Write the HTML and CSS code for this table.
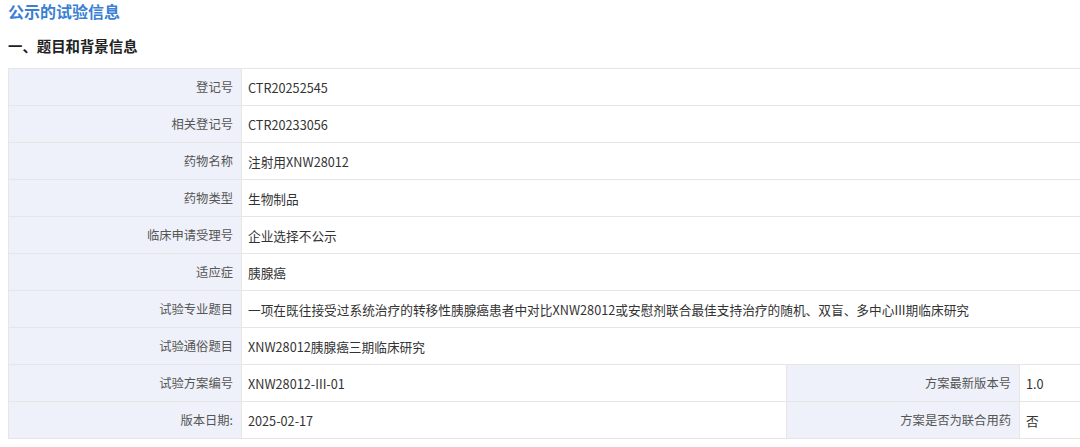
FILE: index.html
```html
<!DOCTYPE html>
<html lang="zh-CN">
<head>
    <meta charset="UTF-8">
    <meta name="viewport" content="width=device-width, initial-scale=1.0">
    <title>公示的试验信息</title>
    <link rel="stylesheet" href="styles.css">
</head>
<body>

    <!-- 页面标题 -->
    <h2 class="page-title">公示的试验信息</h2>
    <h3 class="section-title">一、题目和背景信息</h3>

    <table class="info-table">
        <colgroup>
            <col class="col-label">
            <col class="col-value">
            <col class="col-label">
            <col>
        </colgroup>
        <tr>
            <th>登记号</th>
            <td colspan="3">CTR20252545</td>
        </tr>
        <tr>
            <th>相关登记号</th>
            <td colspan="3">CTR20233056</td>
        </tr>
        <tr>
            <th>药物名称</th>
            <td colspan="3">注射用XNW28012</td>
        </tr>
        <tr>
            <th>药物类型</th>
            <td colspan="3">生物制品</td>
        </tr>
        <tr>
            <th>临床申请受理号</th>
            <td colspan="3">企业选择不公示</td>
        </tr>
        <tr>
            <th>适应症</th>
            <td colspan="3">胰腺癌</td>
        </tr>
        <tr>
            <th>试验专业题目</th>
            <td colspan="3">一项在既往接受过系统治疗的转移性胰腺癌患者中对比XNW28012或安慰剂联合最佳支持治疗的随机、双盲、多中心III期临床研究</td>
        </tr>
        <tr>
            <th>试验通俗题目</th>
            <td colspan="3">XNW28012胰腺癌三期临床研究</td>
        </tr>
        <tr>
            <th>试验方案编号</th>
            <td>XNW28012-III-01</td>
            <th>方案最新版本号</th>
            <td>1.0</td>
        </tr>
        <tr>
            <th>版本日期:</th>
            <td>2025-02-17</td>
            <th>方案是否为联合用药</th>
            <td>否</td>
        </tr>
    </table>

</body>
</html>
```

FILE: styles.css
```css
/* CSS */
body {
    font-family: "Noto Sans CJK SC", "Noto Sans", sans-serif;
    color: #333;
    background-color: #fff;
    margin: 0 0 0 8px;
    padding: 0;
}

.page-title {
    font-size: 16px;
    font-weight: bold;
    color: #3a7fd4;
    margin: 0;
    line-height: 22px;
}

.section-title {
    font-size: 14.4px;
    font-weight: bold;
    color: #222;
    margin: 13px 0 11px 0;
    line-height: 22px;
}

.info-table {
    width: calc(100% + 2px);
    border-collapse: collapse;
    table-layout: fixed;
    font-size: 12.7px;
}

.col-label {
    width: 233px;
}

.col-value {
    width: 545px;
}

.info-table th,
.info-table td {
    height: 36px;
    padding: 0 6px;
    border: 1px solid #e6e6e6;
    font-weight: normal;
    white-space: nowrap;
}

.info-table th {
    background-color: #eef1f9;
    color: #555;
    font-size: 12.3px;
    text-align: right;
    padding-right: 8px;
}

.info-table td {
    color: #333;
    text-align: left;
}
```
